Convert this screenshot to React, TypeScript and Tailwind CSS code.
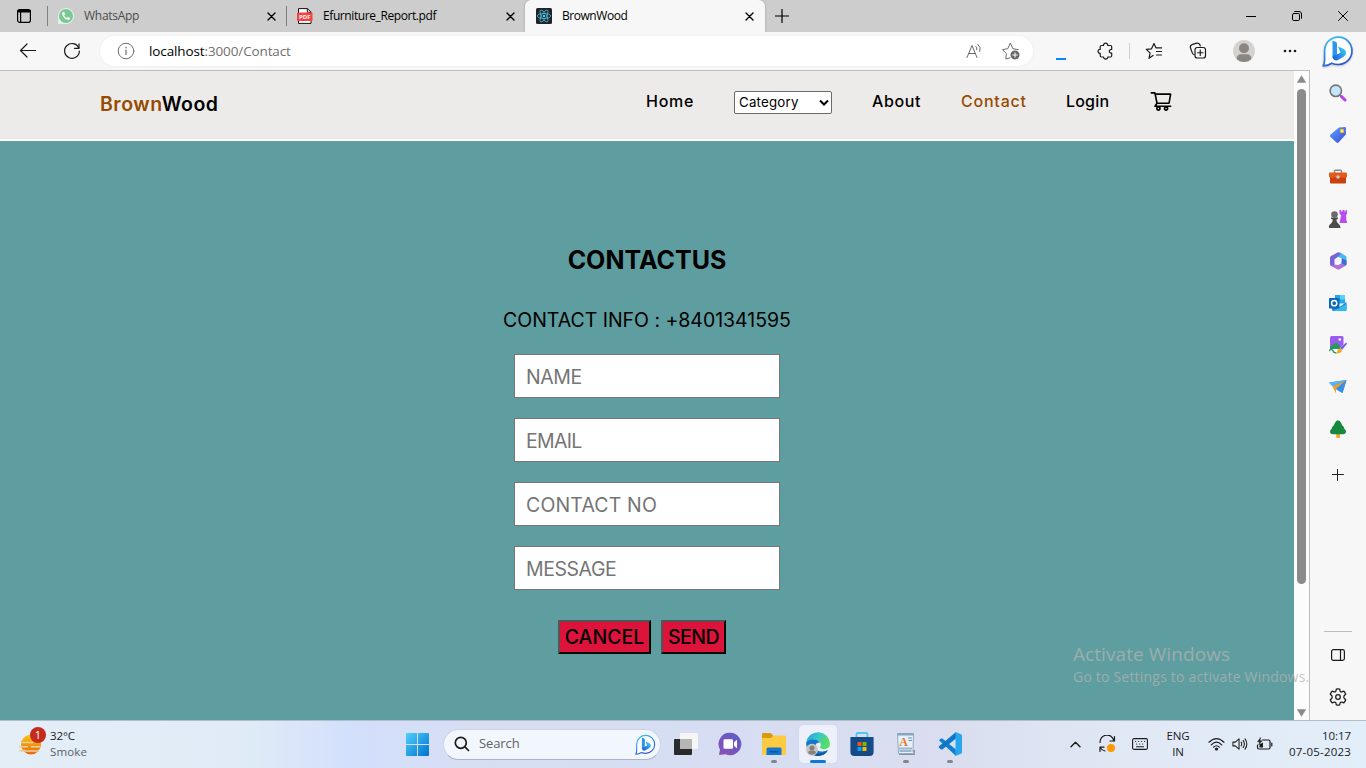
import React from "react";
import { AiOutlineShoppingCart } from "react-icons/ai";
import { FaPhoneAlt } from "react-icons/fa";
import { Settings } from "lucide-react";

type Kids = { children?: React.ReactNode };

const line = {
  fill: "none",
  stroke: "currentColor",
  strokeLinecap: "round" as const,
  strokeLinejoin: "round" as const,
};

function CloseIcon() {
  return (
    <svg width="9" height="9" viewBox="0 0 9 9" {...line} strokeWidth="1.4">
      <path d="M1 1l7 7M8 1l-7 7" />
    </svg>
  );
}

function BingIcon({ size, id }: { size: number; id: string }) {
  return (
    <svg width={size} height={size} viewBox="0 0 32 32">
      <defs>
        <linearGradient id={id + "r"} x1="0.2" y1="0" x2="0.7" y2="1">
          <stop offset="0" stopColor="#35c4f2" />
          <stop offset="0.55" stopColor="#2a7de4" />
          <stop offset="1" stopColor="#2b4cc8" />
        </linearGradient>
        <linearGradient id={id + "b"} x1="0" y1="1" x2="1" y2="0.3">
          <stop offset="0" stopColor="#1f56d8" />
          <stop offset="0.5" stopColor="#2888ea" />
          <stop offset="1" stopColor="#35d0f2" />
        </linearGradient>
      </defs>
      <path
        d="M1.200 30.800Q2.600 28 2.600 24.500V15A13.700 13.700 0 1 1 16.500 29.500Q12.500 29.500 9.800 28.200Q6 30.800 1.200 30.800Z"
        fill="#fff"
        stroke={`url(#${id}r)`}
        strokeWidth="1.700"
        strokeLinejoin="round"
      />
      <path d="M10.500 5.500l3.500 1.500q1 .5 1 1.600v10.600l-4.500 3.300z" fill="#2a95f2" />
      <path d="M16 11.500l5.800 2.500q2.400 1.200 2.400 4 0 2-2.200 3.400l-6.600 3.800q-2.600.8-4.100-1.200-.9-1.400-.6-3l7.900-3.300z" fill={`url(#${id}b)`} />
    </svg>
  );
}

function Tab({ icon, title, className }: { icon: React.ReactNode; title: React.ReactNode; className: string }) {
  return (
    <div className={"flex h-8 shrink-0 items-center " + className}>
      <div className="flex w-[26px] shrink-0 items-center">{icon}</div>
      <div className="flex-1 whitespace-nowrap text-[12px]">{title}</div>
      <CloseIcon />
    </div>
  );
}

function TabBar() {
  return (
    <div className="flex h-8 shrink-0 items-center bg-[#cdcdcd] text-black">
      <div className="flex w-[47px] shrink-0 pl-4">
        <svg width="16" height="16" viewBox="0 0 16 16" {...line} strokeWidth="1.2">
          <rect x="1.6" y="1.6" width="12.800" height="12.800" rx="2.200" />
          <path d="M2.500 3.100h11" strokeWidth="2.800" />
          <path d="M4.600 4v10" />
        </svg>
      </div>
      <div className="h-5 w-px bg-[#808080]" />
      <Tab
        className="w-[238px] pl-[10px] pr-[10px]"
        icon={
          <span className="flex size-4 items-center justify-center rounded-full rounded-bl-none bg-[#e4efe8]">
            <span className="flex size-[14px] items-center justify-center rounded-full bg-[#7cc894] text-[#f0f8f2]">
              <FaPhoneAlt size={8} />
            </span>
          </span>
        }
        title={<span className="tracking-[-0.28px] text-[#4c4c4c]">WhatsApp</span>}
      />
      <div className="h-5 w-px bg-[#808080]" />
      <Tab
        className="w-[238px] pl-[10px] pr-[10px]"
        icon={
          <svg width="16" height="16" viewBox="0 0 16 16">
            <path d="M1.500 5V.6h9l3.500 3.500V15.400H1.500V12" fill="#fff" stroke="#111" strokeWidth="1" />
            <path d="M10.300.6v3.700H14" fill="none" stroke="#111" />
            <rect x="0" y="4.500" width="15.500" height="8.500" rx="1" fill="#f8403f" />
            <text x="7.800" y="11" textAnchor="middle" fontSize="6" fontWeight="700" fill="#fff" fontFamily="Open Sans">PDF</text>
          </svg>
        }
        title={<span className="tracking-[-0.41px]">Efurniture_Report.pdf</span>}
      />
      <Tab
        className="w-[240px] rounded-t-md bg-[#f7f7f7] pl-[11px] pr-[11px] shadow-[0_0_2px_rgba(0,0,0,0.3)]"
        icon={
          <svg width="16" height="16" viewBox="0 0 16 16">
            <rect width="16" height="16" rx="1.500" fill="#20232a" />
            <g fill="none" stroke="#55bdd8" strokeWidth="0.800">
              <ellipse cx="8" cy="8" rx="6.600" ry="2.600" />
              <ellipse cx="8" cy="8" rx="6.600" ry="2.600" transform="rotate(60 8 8)" />
              <ellipse cx="8" cy="8" rx="6.600" ry="2.600" transform="rotate(120 8 8)" />
            </g>
            <circle cx="8" cy="8" r="1.200" fill="#61dafb" />
          </svg>
        }
        title={<span className="tracking-[-0.45px]">BrownWood</span>}
      />
      <div className="flex flex-1 pl-[10px]">
        <svg width="14" height="14" viewBox="0 0 14 14" {...line} strokeWidth="1.200">
          <path d="M7 .5v13M.5 7h13" />
        </svg>
      </div>
      <div className="flex w-[138px] shrink-0">
        <div className="flex w-[46px] items-center justify-center">
          <div className="h-px w-[10px] bg-black" />
        </div>
        <div className="flex w-[46px] items-center justify-center">
          <svg width="10" height="10" viewBox="0 0 10 10" {...line} strokeWidth="1">
            <rect x=".5" y="2.500" width="7" height="7" rx="1.300" />
            <path d="M2.700.5h4.300a2.500 2.500 0 0 1 2.500 2.500v4.300" />
          </svg>
        </div>
        <div className="flex w-[46px] items-center justify-center">
          <svg width="10" height="10" viewBox="0 0 10 10" {...line} strokeWidth="1">
            <path d="M.5.500l9 9M9.500.5l-9 9" />
          </svg>
        </div>
      </div>
    </div>
  );
}

function Slot({ w, children }: Kids & { w: string }) {
  return <div className={"flex shrink-0 items-center justify-center " + w}>{children}</div>;
}

function Toolbar() {
  return (
    <div className="flex h-[38px] shrink-0 items-center bg-[#f7f7f7] text-[#1b1b1b]">
      <Slot w="w-[56px]">
        <svg width="18" height="16" viewBox="0 0 18 16" {...line} strokeWidth="1.200">
          <path d="M16.500 7.500H1.700M8 1L1.500 7.500 8 14" />
        </svg>
      </Slot>
      <Slot w="w-[32px]">
        <svg width="18" height="18" viewBox="0 0 18 18" {...line} strokeWidth="1.200">
          <path d="M15.800 6A7.400 7.400 0 1 0 16.400 9" />
          <path d="M16 1.800V6.300H11.500" />
        </svg>
      </Slot>
      <div className="ml-3 flex h-[30px] w-[933px] shrink-0 items-center rounded-full bg-white pl-[17px] shadow-[0_0_3px_rgba(0,0,0,0.06)]">
        <svg width="18" height="18" viewBox="0 0 18 18" {...line} strokeWidth="1" className="text-[#6f6f6f]">
          <circle cx="9" cy="9" r="7.800" />
          <path d="M9 8.200v4.300" strokeWidth="1.200" />
          <path d="M9 5.500v.2" strokeWidth="1.500" />
        </svg>
        <div className="ml-[14px] flex-1 text-[13.500px] tracking-[-0.12px] text-black">
          localhost<span className="text-[#707070]">:3000/Contact</span>
        </div>
        <svg width="17" height="17" viewBox="0 0 17 17" {...line} strokeWidth="1" className="text-[#6b6b6b]">
          <path d="M1 14.500L6 2.500l5 12M2.700 10.500h6.600" />
          <path d="M9.800 3.200q1.500 1.300 1 3.600M12 1.400q3.300 3 1.900 7" />
        </svg>
        <svg width="20" height="20" viewBox="0 0 20 20" {...line} strokeWidth="1" className="ml-[18px] mr-3 text-[#6b6b6b]">
          <path d="M9 16.800L4.800 18l.6-5.400L1.500 8.600l5.300-.9L9.300 2l2.600 5.700 5.300.9" />
          <circle cx="14" cy="14" r="4.500" fill="#666" stroke="none" />
          <path d="M14 11.800v4.400M11.800 14h4.400" stroke="#fff" />
        </svg>
      </div>
      <Slot w="w-[56px]">
        <div className="mt-[15px] h-[2px] w-[10px] bg-[#0a84ff]" />
      </Slot>
      <Slot w="w-[32px]">
        <svg width="17" height="18" viewBox="0 0 17 18" {...line} strokeWidth="1.200">
          <path d="M4.500 3.500H6.500C6.300.3 11 .3 10.800 3.500h2.700q1.200 0 1.200 1.200v2.700C11.500 7 11.500 11.300 14.700 11v2.800q0 1.200-1.200 1.200h-2.700c.2 2.700-4.300 2.700-4.300 0H4.400q-1.200 0-1.200-1.200v-2.500C.3 11.600.3 7 3.200 7.300V4.700q0-1.200 1.300-1.200z" />
        </svg>
      </Slot>
      <Slot w="w-[17px]">
        <div className="h-4 w-px bg-[#cfcfcf]" />
      </Slot>
      <Slot w="w-[32px]">
        <svg width="18" height="18" viewBox="0 0 18 18" {...line} strokeWidth="1.200">
          <path d="M8 13.400L4 16.300l1.100-5.200L1.300 7.400l5.200-.6L9 1.500l1.900 4.300H16.600M11.500 9.500h5M11.500 13h5" />
        </svg>
      </Slot>
      <Slot w="w-[56px]">
        <svg width="18" height="18" viewBox="0 0 18 18" {...line} strokeWidth="1.200">
          <path d="M5 12.600Q3.800 12.300 3.300 10.900L1.400 5.800Q.9 3.500 3 2.600L7.700 1.200Q9.800.8 10.800 2.600L11.300 4" />
          <rect x="6" y="5.500" width="10.500" height="10.500" rx="2.300" />
          <path d="M11.250 8v5.500M8.500 10.750h5.500" />
        </svg>
      </Slot>
      <Slot w="w-[36px]">
        <svg width="22" height="22" viewBox="0 0 22 22">
          <circle cx="11" cy="11" r="11" fill="#d4d1ce" />
          <circle cx="11" cy="8.300" r="5" fill="#8b8682" />
          <path d="M3.500 18.700Q4 14.200 8 14.200h6q4 0 4.500 4.500Q15.500 22 11 22t-7.500-3.300z" fill="#8b8682" />
        </svg>
      </Slot>
      <Slot w="w-[56px]">
        <svg width="14" height="4" viewBox="0 0 14 4" fill="#1b1b1b">
          <circle cx="2" cy="2" r="1.300" />
          <circle cx="7" cy="2" r="1.300" />
          <circle cx="12" cy="2" r="1.300" />
        </svg>
      </Slot>
    </div>
  );
}

function SiteHeader() {
  return (
    <header className="flex h-[70px] shrink-0 border-b-2 border-white bg-[#edebea] pl-[100px] font-['Inter',sans-serif] text-black">
      <div className="w-[546px] pt-[19px] text-[19.500px] font-semibold leading-[28px] tracking-[0.52px]">
        <span className="text-[#964b00]">Brown</span>Wood
      </div>
      <nav className="flex h-[60px] items-center gap-10 whitespace-nowrap text-[16px] font-medium">
        <span className="w-[48px] tracking-[0.75px]">Home</span>
        <span className="mt-[3px] flex h-[23px] w-[98px] items-center justify-between rounded-[2px] border border-[#6b6b6b] bg-white pl-1 pr-[2px] text-[13.300px] font-normal tracking-[0.2px]">
          Category
          <svg width="10" height="8" viewBox="0 0 10 8" fill="none" stroke="#000" strokeWidth="2">
            <path d="M1 1.500l4 4 4-4" />
          </svg>
        </span>
        <span className="w-[49px] tracking-[0.6px]">About</span>
        <span className="w-[65px] tracking-[0.78px] text-[#964b00]">Contact</span>
        <span className="w-[43px] tracking-[0.2px]">Login</span>
        <AiOutlineShoppingCart size={24} />
      </nav>
    </header>
  );
}

function ContactPage() {
  const fields = [
    { name: "NAME", spacing: "tracking-[-0.4px]" },
    { name: "EMAIL", spacing: "tracking-[-0.7px]" },
    { name: "CONTACT NO", spacing: "tracking-[0.15px]" },
    { name: "MESSAGE", spacing: "tracking-[-0.45px]" },
  ];
  return (
    <main className="relative flex flex-1 flex-col items-center bg-[#5f9ea0] pt-[100px] font-['Inter',sans-serif] text-black">
      <h1 className="text-[25px] font-bold leading-[38px]">CONTACTUS</h1>
      <p className="mt-[26px] whitespace-nowrap text-[19.500px] leading-[30px] tracking-[-0.03px]">CONTACT INFO : +8401341595</p>
      <form className="mt-[19px] flex flex-col gap-5">
        {fields.map(({ name, spacing }) => (
          <input
            key={name}
            placeholder={name}
            className={"h-[44px] w-[266px] border border-[#767676] bg-white px-[11px] pt-px text-[19.500px] placeholder:text-[#757575] " + spacing}
          />
        ))}
      </form>
      <div className="mr-[10px] mt-[30px] flex gap-[10px] text-[19.500px] font-medium">
        <button className="h-[34px] w-[93px] border-2 border-b-black border-l-[#555] border-r-black border-t-[#555] bg-[#dc143c] leading-[30px]">
          CANCEL
        </button>
        <button className="h-[34px] w-[65px] border-2 border-b-black border-l-[#555] border-r-black border-t-[#555] bg-[#dc143c] leading-[30px] tracking-[-0.5px]">
          SEND
        </button>
      </div>
      <div className="absolute left-[1073px] top-[499px] z-10 whitespace-nowrap font-['Open_Sans',sans-serif] text-[#b2b2b2]/75">
        <div className="text-[19px] leading-[28px] tracking-[0.07px]">Activate Windows</div>
        <div className="text-[14px] leading-[18px] tracking-[0.2px]">Go to Settings to activate Windows.</div>
      </div>
    </main>
  );
}

function Scrollbar() {
  return (
    <div className="flex w-[15px] shrink-0 flex-col items-center bg-[#fcfcfc]">
      <svg width="9" height="8" viewBox="0 0 9 8" className="mt-[4px]">
        <path d="M4.500.7L8.800 7.500H.2z" fill="#8b8b8b" stroke="#8b8b8b" strokeWidth=".5" strokeLinejoin="round" />
      </svg>
      <div className="mt-[6px] h-[495px] w-[9px] rounded-full bg-[#8b8b8b]" />
      <svg width="9" height="8" viewBox="0 0 9 8" className="mt-[125px]">
        <path d="M4.500 7.300L8.800.5H.2z" fill="#8b8b8b" stroke="#8b8b8b" strokeWidth=".5" strokeLinejoin="round" />
      </svg>
    </div>
  );
}

function SideCell({ children }: Kids) {
  return (
    <div className="flex h-[42px] shrink-0 items-center justify-center">
      <svg width="18" height="18" viewBox="0 0 18 18">
        {children}
      </svg>
    </div>
  );
}

function EdgeSidebar() {
  return (
    <aside className="flex w-14 shrink-0 flex-col bg-[#f7f7f7]">
      <div className="flex h-[40px] shrink-0 items-center justify-center pb-[3px] drop-shadow-[0_1px_1px_rgba(0,0,0,0.2)]">
        <BingIcon size={32} id="bingTop" />
      </div>
      <SideCell>
        <path d="M11 11l2 2" stroke="#777" strokeWidth="2" />
        <path d="M12.500 12.500l3.500 3.500" stroke="#b640f0" strokeWidth="3" strokeLinecap="round" />
        <circle cx="6.800" cy="6.800" r="5.700" fill="#c2e7fb" stroke="#737373" strokeWidth="1.600" />
      </SideCell>
      <SideCell>
        <defs>
          <linearGradient id="tag" x1="0" y1="0" x2="1" y2="1">
            <stop offset="0" stopColor="#5aa5ff" />
            <stop offset="1" stopColor="#3b49d8" />
          </linearGradient>
        </defs>
        <path d="M10 1.500l6-.5q1 0 1 1l-.2 6.500-7.300 8q-1 .8-2 0L1.300 10.800q-.8-1 0-2z" fill="url(#tag)" />
        <circle cx="13" cy="5" r="1.600" fill="#fff" stroke="#f7b916" strokeWidth="1.400" />
      </SideCell>
      <SideCell>
        <path d="M5.500 5V3.200q0-1 1-1h5q1 0 1 1V5" fill="none" stroke="#8a8a8a" strokeWidth="1.400" />
        <rect x="1" y="8" width="16" height="7.500" rx="1" fill="#c8410f" />
        <rect x="0" y="4.500" width="18" height="5" rx="1" fill="#e25b1c" />
        <circle cx="9" cy="9" r="1.800" fill="#c9c9c9" />
      </SideCell>
      <SideCell>
        <path d="M10.500 0h1.700v1.600h1.300V0h2v1.600h1.300V0H18v4l-1 1 .4 5.700q1 .6.600 2.300h-7.500l1.700-8-1.700-1z" fill="#b94df0" />
        <circle cx="5.500" cy="4.500" r="3.300" fill="#6b6b6b" />
        <path d="M2 7.500h7v1.600l-1.600.5q0 3.200 2.300 4.300 1.800 1 1.800 4.100H-.3q0-3.100 1.800-4.100 2.300-1.100 2.300-4.300L2 9.100z" fill="#4c4c4c" />
      </SideCell>
      <SideCell>
        <path d="M8.500.5l3 .2 5 3q1 .6 1 1.600v3.500L12.500 6 8.800 5 5.500 7z" fill="#45b9f2" />
        <path d="M8.500.4L2 4.100Q1 4.800 1 6v6q0 1 1 1.700l3.500 1.800V7.300l5-3.800L12 1z" fill="#7663d5" />
        <path d="M17.500 8.500V12q0 1-1 1.700l-6 3.500q-1.200.5-2.400 0L2 13.700l4-1.200 3 .8 3.800-2.300V6z" fill="#ae72dd" />
        <path d="M12.800 6.200l4.700 2V12q0 .8-1 1.400l-4-2.200z" fill="#3770ce" />
        <path d="M9.200 6l2.900 1.600v3L9.200 12.200 6.400 10.600v-3z" fill="#f7f7f7" />
      </SideCell>
      <SideCell>
        <path d="M6 1h10v8.500H6z" fill="#26a7e8" />
        <path d="M11 1h5v4.500h-5z" fill="#55d0fb" />
        <path d="M3 9.500l7.500 3.500L17.500 8v7.800q0 1.200-1.200 1.200H4.200Q3 17 3 15.800z" fill="#1689d8" />
        <path d="M4 17l13.500-7v5.800q0 1.200-1.200 1.200z" fill="#31baf0" />
        <rect x="0" y="4" width="10.500" height="10.500" rx="1" fill="#0b67b9" />
        <circle cx="5.200" cy="9.200" r="2.600" fill="none" stroke="#fff" strokeWidth="1.500" />
      </SideCell>
      <SideCell>
        <rect x="1" y="0" width="13.500" height="12.500" rx="1.500" fill="#985df0" />
        <path d="M1 11l5-4q1-.7 2 0l4 4V13H1z" fill="#279a59" />
        <circle cx="10.800" cy="3.500" r="1.300" fill="#fff" />
        <path d="M0 15q2-2.500 4-.7 0 2.500 3.500 2.700" fill="none" stroke="#27966b" strokeWidth="1.300" />
        <path d="M8 17.500q0-4.500 3-5l2 2q-1 3-5 3z" fill="#f5a716" />
        <path d="M11 12l6-5.500q1.300 0 1.200 1.300L13 14z" fill="#7454e8" stroke="#f7f7f7" strokeWidth=".4" />
      </SideCell>
      <SideCell>
        <path d="M0 4.500L17.500 2l-4 13-4.500-2.500z" fill="#2b90e4" />
        <path d="M0 4.500L17.500 2 3.500 8.500z" fill="#54b6fa" />
        <path d="M3.500 8.500L17.500 2 7 11v4.500z" fill="#f29f28" />
        <path d="M7 11L17.500 2l-4 13z" fill="#388fea" />
      </SideCell>
      <SideCell>
        <rect x="7.300" y="11" width="3.600" height="7" rx="1" fill="#f2a11e" />
        <path d="M9 .3q2 0 3 2.500l1.300 2.700q1.800 1 2 3.200 1.700 1 1.700 2.800 0 2.800-3 2.800H4q-3 0-3-2.800Q1 9.700 2.700 8.700q.2-2.200 2-3.200L6 2.800Q7 .3 9 .3z" fill="#16893f" />
      </SideCell>
      <div className="mt-[4px] flex h-[42px] items-center justify-center text-[#222]">
        <svg width="12" height="12" viewBox="0 0 12 12" {...line} strokeWidth="1">
          <path d="M5.500.5v11M.5 5.500h11" />
        </svg>
      </div>
      <div className="mx-auto mt-[135px] h-px w-7 shrink-0 bg-[#bdbdbd]" />
      <div className="mt-[2px] flex h-[42px] items-center justify-center text-[#1b1b1b]">
        <svg width="14" height="12" viewBox="0 0 14 12" {...line} strokeWidth="1.200">
          <rect x=".6" y=".6" width="12.800" height="10.800" rx="1.800" />
          <path d="M9.500 1v10" />
        </svg>
      </div>
      <div className="flex h-[42px] items-center justify-center text-[#1b1b1b]">
        <svg width="18" height="18" viewBox="0 0 18 18" {...line} strokeWidth="1.250">
          <path d="M7.300 1.200Q9 .7 10.700 1.200L11.200 3.300Q11.800 4.100 12.800 3.900L14.900 3.200Q16.200 4.500 16.700 6.200L15.100 7.700Q14.500 9 15.100 10.300L16.700 11.800Q16.200 13.500 14.900 14.800L12.800 14.100Q11.800 13.900 11.200 14.700L10.700 16.800Q9 17.300 7.300 16.800L6.800 14.700Q6.200 13.900 5.200 14.100L3.100 14.800Q1.800 13.500 1.300 11.800L2.900 10.300Q3.500 9 2.900 7.700L1.300 6.200Q1.800 4.500 3.100 3.200L5.200 3.900Q6.200 4.100 6.800 3.300Z" />
          <circle cx="9" cy="9" r="2.300" />
        </svg>
      </div>
    </aside>
  );
}

function AppCell({ dot, active, children }: Kids & { dot?: boolean; active?: boolean }) {
  return (
    <div className="flex w-11 shrink-0 items-center justify-center">
      <div
        className={
          "relative flex h-[38px] w-[38px] items-center justify-center rounded " + (active ? "bg-[#edf0fa] shadow-[0_0_1px_#b8bfd4]" : "")
        }
      >
        {children}
        {dot && <span className="absolute bottom-0 left-4 h-[3px] w-[6px] rounded-full bg-[#85868e]" />}
        {active && <span className="absolute bottom-0 left-[11px] h-[3px] w-4 rounded-full bg-[#0a78d4]" />}
      </div>
    </div>
  );
}

function Taskbar() {
  return (
    <footer className="flex h-12 shrink-0 items-center border-t border-[#b4bccb] bg-[linear-gradient(90deg,#e3eef7_0%,#e0ebf7_18%,#d2dffb_26%,#d8def2_36%,#d6def4_48%,#d9ddef_68%,#e0e8f4_82%,#e2eef9_100%)] pb-px font-['Open_Sans',sans-serif] text-[#1b1b1b]">
      <div className="flex w-[399px] shrink-0 items-center pl-[18px]">
        <div className="relative h-[30px] w-[30px]">
          <svg width="30" height="30" viewBox="0 0 30 30">
            <defs>
              <linearGradient id="sun" x1="0" y1="0" x2="0" y2="1">
                <stop offset="0" stopColor="#fbc617" />
                <stop offset="1" stopColor="#e7670c" />
              </linearGradient>
            </defs>
            <circle cx="13" cy="15.500" r="10" fill="url(#sun)" />
            <path d="M4 13.500h11M1 17.800h9M13 17.800h9M3 22h18M1 21.500h6" stroke="#e8cf9d" strokeWidth="1.400" />
          </svg>
          <span className="absolute left-[12px] top-[-2px] flex size-4 items-center justify-center rounded-full bg-[#c42b1c] text-[11px] text-white">1</span>
        </div>
        <div className="ml-[2px] text-[11.500px] leading-4 tracking-[-0.1px]">
          <div>32°C</div>
          <div className="tracking-[0.12px] text-[#5c6066]">Smoke</div>
        </div>
      </div>
      <div className="flex w-[44px] shrink-0 pl-[7px]">
        <svg width="23" height="23" viewBox="0 0 23 23">
          <defs>
            <linearGradient id="win" x1="0" y1="0" x2="1" y2="1">
              <stop offset="0" stopColor="#4fd0fb" />
              <stop offset="1" stopColor="#0070d0" />
            </linearGradient>
          </defs>
          <path d="M1 0h10v11H0V1q0-1 1-1zM12 0h10q1 0 1 1v10H12zM0 12h11v11H1q-1 0-1-1zM12 12h11v10q0 1-1 1H12z" fill="url(#win)" />
        </svg>
      </div>
      <div className="flex h-[31px] w-[218px] shrink-0 items-center rounded-full border border-[#ccd3e7] border-b-[#adb4c8] bg-[#f2f6fd] pl-[10px] pr-[4px]">
        <svg width="16" height="16" viewBox="0 0 16 16" {...line} strokeWidth="1.700">
          <circle cx="6.800" cy="6.800" r="5.500" />
          <path d="M10.900 10.900L14.500 14.500" />
        </svg>
        <span className="ml-[9px] flex-1 text-[13px] tracking-[-0.1px] text-[#5e6168]">Search</span>
        <BingIcon size={21} id="bingBar" />
      </div>
      <div className="ml-[3px] flex">
        <AppCell>
          <svg width="24" height="24" viewBox="0 0 24 24">
            <rect x="0" y="7" width="18" height="16" rx="1" fill="#292a29" />
            <rect x="6" y="1" width="18" height="16" rx="1" fill="#f6f6f5" />
            <path d="M6 7h12v10H6z" fill="#b6b6b6" />
          </svg>
        </AppCell>
        <AppCell>
          <svg width="24" height="24" viewBox="0 0 24 24">
            <defs>
              <linearGradient id="chat" x1="0" y1="1" x2="1" y2="0">
                <stop offset="0" stopColor="#8d4fb4" />
                <stop offset="1" stopColor="#5860c8" />
              </linearGradient>
            </defs>
            <path d="M12 .8A11.200 11.200 0 1 1 7.500 22.200L1 23l1-5.500A11.200 11.200 0 0 1 12 .8z" fill="url(#chat)" />
            <rect x="5.500" y="7.200" width="9.500" height="9.500" rx="1.300" fill="#fff" />
            <path d="M16 10.200L19 7.800v8.400l-3-2.400z" fill="#fff" />
          </svg>
        </AppCell>
        <AppCell dot>
          <svg width="24" height="24" viewBox="0 0 24 24">
            <path d="M0 2q0-1 1-1h7q1 0 1.600.7L11 3.500V8H0z" fill="#d9990c" />
            <path d="M0 6h9l2.500-2.500H23q1 0 1 1V22q0 1-1 1H1q-1 0-1-1z" fill="#fdcb42" />
            <path d="M4.500 23v-6q0-1.500 1.500-1.500h12q1.500 0 1.500 1.500v6z" fill="#1377d1" />
            <rect x="7.500" y="19" width="9" height="1.600" rx=".8" fill="#0b55a0" />
          </svg>
        </AppCell>
        <AppCell active>
          <svg width="24" height="24" viewBox="0 0 24 24">
            <defs>
              <linearGradient id="edgeTop" x1="0" y1="0" x2="1" y2="0.4">
                <stop offset="0" stopColor="#2599dd" />
                <stop offset="0.500" stopColor="#35c7cc" />
                <stop offset="1" stopColor="#5ade60" />
              </linearGradient>
            </defs>
            <path d="M.2 10A12 11.800 0 0 1 24 11.500q0 4.500-4.500 5.500-4 .7-5.800-1.600 2-2 .4-4.900Q12 7.500 8 7.700 3 8 .2 12z" fill="url(#edgeTop)" />
            <path d="M.1 11.500Q2 7.300 7.800 7.500q4.200.2 6.200 3-3.700-.6-4.500 2.400-.5 4.500 3 6 5 1.700 9.500-.8Q18.600 24 12 24 1 23.500.1 11.500z" fill="#1477c9" />
            <path d="M6.200 12Q5.300 17 9 20.500q5 3.400 12.800-1.900Q18.400 24 12 24 4 23.500 4 16q0-2.800 2.200-4z" fill="#125092" />
            <circle cx="6" cy="17.800" r="6" fill="#c9c7c5" />
            <circle cx="6" cy="16" r="2.600" fill="#85807c" />
            <path d="M2 20.800q.3-2 2-2h4q1.700 0 2 2-1.700 2-4 2t-4-2z" fill="#85807c" />
          </svg>
        </AppCell>
        <AppCell>
          <svg width="24" height="24" viewBox="0 0 24 24">
            <path d="M6.500 5.500V2.200Q6.500 1 7.700 1h8.600q1.200 0 1.200 1.200v3.300" fill="none" stroke="#4fc4f5" strokeWidth="1.800" />
            <path d="M1 5h22q.6 0 .6.700V20q0 4-4 4H4.400q-4 0-4-4V5.700Q.4 5 1 5z" fill="#154a86" />
            <path d="M7.500 10h4v4h-4z" fill="#f25022" />
            <path d="M12.500 10h4v4h-4z" fill="#7fba00" />
            <path d="M7.500 15h4v4h-4z" fill="#00a4ef" />
            <path d="M12.500 15h4v4h-4z" fill="#ffb900" />
          </svg>
        </AppCell>
        <AppCell dot>
          <svg width="24" height="24" viewBox="0 0 24 24">
            <path d="M5 18h16v5H5z" fill="#7f93ab" />
            <path d="M3.500 1.500h16L19 20l2 1.500H4.500z" fill="#e5f0fa" stroke="#93aac1" />
            <path d="M3.500 1h16v2.500h-16z" fill="#87a4c0" />
            <text x="9.500" y="14" textAnchor="middle" fontSize="12" fontWeight="700" fill="#e87925" fontFamily="Liberation Serif">A</text>
            <path d="M14 6h4M14.500 8.500H18" stroke="#6f91b3" />
            <path d="M5 16.500h13M5.500 19h12" stroke="#9cb6cc" strokeWidth="1.800" />
          </svg>
        </AppCell>
        <AppCell dot>
          <svg width="24" height="24" viewBox="0 0 24 24">
            <path d="M1 8.200L3 6.600q.7-.4 1.300 0L18 17.500V24z" fill="#1180cd" />
            <path d="M1 15.800L3 17.400q.7.400 1.300 0L18 6.500V0L1 14.300q-.7.700 0 1.500z" fill="#0f78c5" />
            <path d="M17.500 0L24 2.800v18.400L17.500 24z" fill="#28a7ee" />
          </svg>
        </AppCell>
      </div>
      <div className="flex-1" />
      <div className="flex shrink-0 items-center">
        <Slot w="w-[30px]">
          <svg width="11" height="7" viewBox="0 0 11 7" {...line} strokeWidth="1.400">
            <path d="M1 5.800L5.500 1.300 10 5.800" />
          </svg>
        </Slot>
        <Slot w="w-[33px]">
          <svg width="18" height="18" viewBox="0 0 18 18" {...line} strokeWidth="1.200">
            <path d="M2 7.500A7 7 0 0 1 15.800 5.500M16.500 1.500V6H12M2 16.500v-4.300h4M2.300 12.800Q4 15.500 7 16" />
            <circle cx="13" cy="13" r="4" fill="#ff9800" stroke="none" />
          </svg>
        </Slot>
        <Slot w="w-[33px]">
          <svg width="16" height="12" viewBox="0 0 16 12" {...line} strokeWidth="1.100">
            <rect x=".6" y=".6" width="14.800" height="10.800" rx="1.500" />
            <path d="M3.500 3.500h.2M6.500 3.500h.2M9.500 3.500h.2M12.500 3.500h.2M4.500 6h.2M7.500 6h.2M10.500 6h.2M4.500 8.800h7" />
          </svg>
        </Slot>
        <div className="w-[44px] text-center text-[11.500px] leading-4 tracking-[-0.1px]">
          <div>ENG</div>
          <div>IN</div>
        </div>
        <Slot w="w-[32px]">
          <svg width="17" height="14" viewBox="0 0 17 14" {...line} strokeWidth="1.200">
            <path d="M1 5.200q7.500-7.300 15 0M3.300 7.800q5.200-5.200 10.400 0M5.600 10.200q2.900-2.900 5.800 0" />
            <circle cx="8.500" cy="12" r="1" fill="currentColor" />
          </svg>
        </Slot>
        <Slot w="w-[16px]">
          <svg width="17" height="14" viewBox="0 0 17 14" {...line} strokeWidth="1.100">
            <path d="M1 5h2.500L7.500 1.500v11L3.500 9H1zM9.700 5q1.300 2 0 4M11.800 3.200q2.700 3.800 0 7.600M13.800 1.500q4 5.500 0 11" />
          </svg>
        </Slot>
        <Slot w="w-[32px]">
          <svg width="17" height="14" viewBox="0 0 17 14" {...line} strokeWidth="1.200">
            <path d="M6.500 3H12.500q1.500 0 1.500 1.500V10.500q0 1.500-1.500 1.500H3q-1.500 0-1.500-1.500V8M15.800 6v3" />
            <path d="M3.500 7.500V10.500H7V5.500z" fill="currentColor" stroke="none" />
            <path d="M4.500.8L1.500 4.800H3.800L2.800 8 6 3.800H4z" fill="currentColor" strokeWidth=".5" />
          </svg>
        </Slot>
        <div className="w-[71px] whitespace-nowrap text-right text-[11.500px] leading-4">
          <div className="tracking-[-0.05px]">10:17</div>
          <div className="tracking-[0.2px]">07-05-2023</div>
        </div>
        <div className="w-[15px]" />
      </div>
    </footer>
  );
}

export default function App() {
  return (
    <div className="flex h-[768px] w-[1366px] flex-col overflow-hidden bg-[#f7f7f7] font-['Open_Sans',sans-serif]">
      <TabBar />
      <div className="flex h-[688px] shrink-0">
        <div className="flex w-[1310px] shrink-0 flex-col">
          <Toolbar />
          <div className="flex flex-1 border-r border-t border-[#bdbdbd]">
            <div className="flex w-[1294px] shrink-0 flex-col">
              <SiteHeader />
              <ContactPage />
            </div>
            <Scrollbar />
          </div>
        </div>
        <EdgeSidebar />
      </div>
      <Taskbar />
    </div>
  );
}
